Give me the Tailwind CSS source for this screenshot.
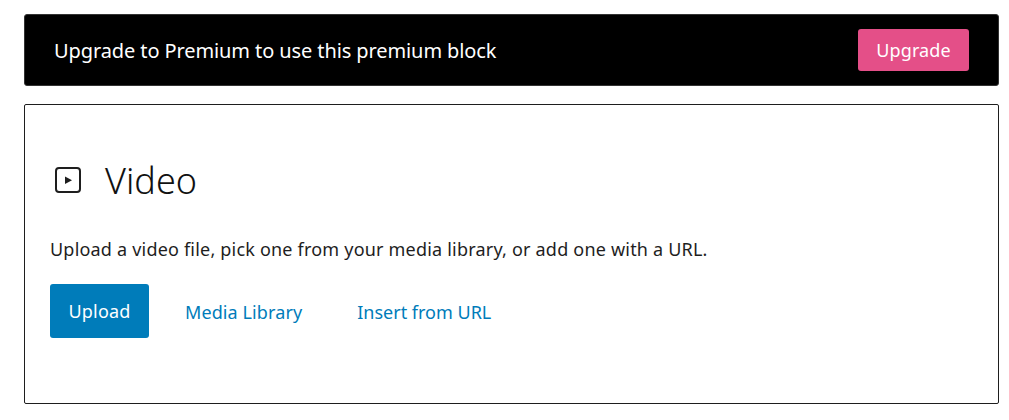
<!DOCTYPE html>
<html lang="en">

<head>
    <meta charset="UTF-8">
    <title>Video block</title>
    <script src="https://cdn.jsdelivr.net/npm/@tailwindcss/browser@4"></script>
</head>

<body class="bg-white font-['Noto_Sans',sans-serif] h-[420px] overflow-hidden">
    <div class="flex flex-col gap-[18px] pt-[14px] pl-6 pr-[10px]">

        <!-- PREMIUM BANNER -->
        <div class="flex items-center justify-between h-[72px] bg-black border border-[#333] rounded-[3px] pl-[29px] pr-[29px]">
            <p class="text-white text-[20px] tracking-[-0.1px] pt-px">Upgrade to Premium to use this premium block</p>
            <a class="flex items-center justify-center w-[111px] h-[42px] bg-[#e44f88] rounded-[3px] text-white text-[18px] tracking-[0.1px]">Upgrade</a>
        </div>

        <!-- VIDEO PLACEHOLDER -->
        <div class="h-[300px] border border-[#1e1e1e] rounded-[2px] pl-[25px] pt-[50px]">
            <div class="flex items-center h-[52px]">
                <svg class="w-[26px] h-[26px] ml-[5px] mt-[-2px]" viewBox="0 0 26 26" fill="none">
                    <rect x="1" y="1" width="24" height="24" rx="3" stroke="#1e1e1e" stroke-width="2"/>
                    <path d="M10 9.5v7.5l7-3.75z" fill="#1e1e1e"/>
                </svg>
                <h2 class="ml-6 text-[36px] font-light text-[#111]">Video</h2>
            </div>
            <p class="mt-[29px] text-[18px] tracking-[0.2px] text-[#1e1e1e] leading-[26px]">Upload a video file, pick one from your media library, or add one with a URL.</p>
            <div class="flex items-center mt-[22px]">
                <a class="flex items-center justify-center w-[99px] h-[54px] bg-[#007cba] rounded-[3px] text-white text-[18px] tracking-[0.2px] pt-px">Upload</a>
                <a class="ml-9 text-[#007cba] text-[18px] tracking-[0.1px] pt-[2px]">Media Library</a>
                <a class="ml-[55px] text-[#007cba] text-[18px] pt-[2px]">Insert from URL</a>
            </div>
        </div>

    </div>
</body>

</html>
